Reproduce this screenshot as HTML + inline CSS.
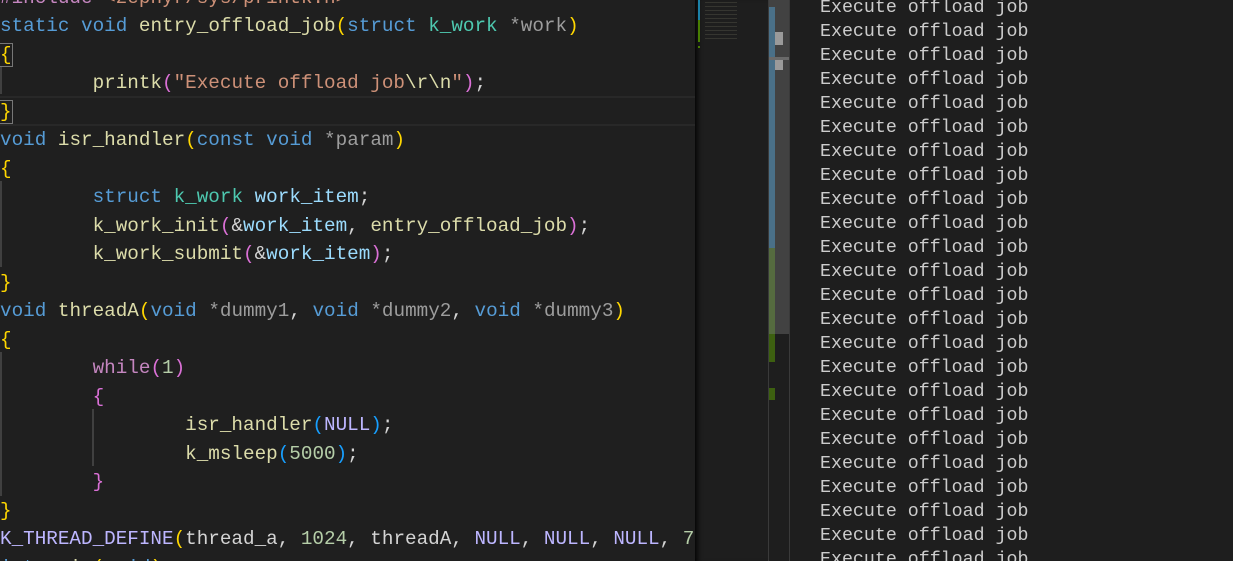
<!DOCTYPE html>
<html><head><meta charset="utf-8"><style>
html,body{margin:0;padding:0;width:1233px;height:561px;overflow:hidden;background:#1e1e1e}
.ed{position:absolute;left:0;top:0;width:695px;height:561px;background:#1f1f1f;overflow:hidden;font-family:"Liberation Mono",monospace;font-size:19.3px;color:#d4d4d4}
.l{position:absolute;left:0;height:28px;line-height:28px;white-space:pre;margin-top:2px}
.k{color:#569cd6}.f{color:#dcdcaa}.s{color:#ce9178}.y{color:#ffd700}.p{color:#da70d6}.b{color:#179fff}
.v{color:#9cdcfe}.n{color:#b5cea8}.t{color:#4ec9b0}.g{color:#9d9d9d}.m{color:#c586c0}.mc{color:#bdb6ff}
.con{position:absolute;left:790px;top:0;width:443px;height:561px;background:#1e1e1e;font-family:"Liberation Mono",monospace;font-size:18.3px;color:#cccccc;overflow:hidden}
.c{position:absolute;left:30px;height:24px;line-height:24px;white-space:pre;margin-top:2px}
</style></head><body>
<div class="ed">
<div style="position:absolute;left:0;top:96px;width:695px;height:26px;border-top:2px solid #282828;border-bottom:2px solid #282828"></div>
<div style="position:absolute;left:0;top:66px;width:2px;height:28px;background:#404040"></div>
<div style="position:absolute;left:0;top:181px;width:2px;height:86px;background:#404040"></div>
<div style="position:absolute;left:0;top:352px;width:2px;height:144px;background:#404040"></div>
<div style="position:absolute;left:92px;top:409px;width:2px;height:57px;background:#404040"></div>
<div class="l" style="top:-18px"><span class="m">#include</span> <span class="s">&lt;zephyr/sys/printk.h&gt;</span></div>
<div class="l" style="top:10px"><span class="k">static</span> <span class="k">void</span> <span class="f">entry_offload_job</span><span class="y">(</span><span class="k">struct</span> <span class="t">k_work</span> <span class="g">*work</span><span class="y">)</span></div>
<div class="l" style="top:39px"><span class="y" style="outline:1px solid #777">{</span></div>
<div class="l" style="top:67px">        <span class="f">printk</span><span class="p">(</span><span class="s">"Execute offload job</span><span class="f">\r\n</span><span class="s">"</span><span class="p">)</span>;</div>
<div class="l" style="top:96px"><span class="y" style="outline:1px solid #777">}</span></div>
<div class="l" style="top:124px"><span class="k">void</span> <span class="f">isr_handler</span><span class="y">(</span><span class="k">const</span> <span class="k">void</span> <span class="g">*param</span><span class="y">)</span></div>
<div class="l" style="top:153px"><span class="y">{</span></div>
<div class="l" style="top:181px">        <span class="k">struct</span> <span class="t">k_work</span> <span class="v">work_item</span>;</div>
<div class="l" style="top:210px">        <span class="f">k_work_init</span><span class="p">(</span>&amp;<span class="v">work_item</span>, <span class="f">entry_offload_job</span><span class="p">)</span>;</div>
<div class="l" style="top:238px">        <span class="f">k_work_submit</span><span class="p">(</span>&amp;<span class="v">work_item</span><span class="p">)</span>;</div>
<div class="l" style="top:267px"><span class="y">}</span></div>
<div class="l" style="top:295px"><span class="k">void</span> <span class="f">threadA</span><span class="y">(</span><span class="k">void</span> <span class="g">*dummy1</span>, <span class="k">void</span> <span class="g">*dummy2</span>, <span class="k">void</span> <span class="g">*dummy3</span><span class="y">)</span></div>
<div class="l" style="top:324px"><span class="y">{</span></div>
<div class="l" style="top:352px">        <span class="m">while</span><span class="p">(</span><span class="n">1</span><span class="p">)</span></div>
<div class="l" style="top:381px">        <span class="p">{</span></div>
<div class="l" style="top:409px">                <span class="f">isr_handler</span><span class="b">(</span><span class="mc">NULL</span><span class="b">)</span>;</div>
<div class="l" style="top:438px">                <span class="f">k_msleep</span><span class="b">(</span><span class="n">5000</span><span class="b">)</span>;</div>
<div class="l" style="top:466px">        <span class="p">}</span></div>
<div class="l" style="top:495px"><span class="y">}</span></div>
<div class="l" style="top:523px"><span class="mc">K_THREAD_DEFINE</span><span class="y">(</span>thread_a, <span class="n">1024</span>, threadA, <span class="mc">NULL</span>, <span class="mc">NULL</span>, <span class="mc">NULL</span>, <span class="n">7</span>, <span class="n">0</span>, <span class="n">0</span><span class="y">)</span>;</div>
<div class="l" style="top:552px"><span class="k">int</span> <span class="f">main</span><span class="y">(</span><span class="k">void</span><span class="y">)</span></div>
</div>
<div style="position:absolute;left:695px;top:0;width:73px;height:561px;background:#1e1e1e;box-shadow:inset 6px 0 6px -4px #000"></div>
<div style="position:absolute;left:698px;top:0;width:2px;height:20px;background:#1b81a8"></div>
<div style="position:absolute;left:698px;top:20px;width:2px;height:22px;background:#487e02"></div>
<div style="position:absolute;left:698px;top:46px;width:2px;height:2px;background:#487e02"></div>
<div style="position:absolute;left:705px;top:2px;width:32px;height:40px;opacity:.18;background:repeating-linear-gradient(#a0a080 0 1px,transparent 1px 4px)"></div>
<div style="position:absolute;left:768px;top:0;width:21px;height:334px;background:#424242"></div>
<div style="position:absolute;left:768px;top:0;width:1px;height:561px;background:#3a3a3a"></div>
<div style="position:absolute;left:789px;top:0;width:1px;height:561px;background:#3a3a3a"></div>
<div style="position:absolute;left:769px;top:7px;width:6px;height:241px;background:#4a7088"></div>
<div style="position:absolute;left:769px;top:248px;width:6px;height:86px;background:#556b3f"></div>
<div style="position:absolute;left:769px;top:334px;width:6px;height:28px;background:#3d6010"></div>
<div style="position:absolute;left:769px;top:388px;width:6px;height:12px;background:#3d6010"></div>
<div style="position:absolute;left:775px;top:32px;width:8px;height:13px;background:#9a9a9a"></div>
<div style="position:absolute;left:775px;top:57px;width:8px;height:13px;background:#9a9a9a"></div>
<div style="position:absolute;left:769px;top:57px;width:20px;height:3px;background:#6a6a6a"></div>
<div class="con">
<div class="c" style="top:-6px">Execute offload job</div>
<div class="c" style="top:18px">Execute offload job</div>
<div class="c" style="top:42px">Execute offload job</div>
<div class="c" style="top:66px">Execute offload job</div>
<div class="c" style="top:90px">Execute offload job</div>
<div class="c" style="top:114px">Execute offload job</div>
<div class="c" style="top:138px">Execute offload job</div>
<div class="c" style="top:162px">Execute offload job</div>
<div class="c" style="top:186px">Execute offload job</div>
<div class="c" style="top:210px">Execute offload job</div>
<div class="c" style="top:234px">Execute offload job</div>
<div class="c" style="top:258px">Execute offload job</div>
<div class="c" style="top:282px">Execute offload job</div>
<div class="c" style="top:306px">Execute offload job</div>
<div class="c" style="top:330px">Execute offload job</div>
<div class="c" style="top:354px">Execute offload job</div>
<div class="c" style="top:378px">Execute offload job</div>
<div class="c" style="top:402px">Execute offload job</div>
<div class="c" style="top:426px">Execute offload job</div>
<div class="c" style="top:450px">Execute offload job</div>
<div class="c" style="top:474px">Execute offload job</div>
<div class="c" style="top:498px">Execute offload job</div>
<div class="c" style="top:522px">Execute offload job</div>
<div class="c" style="top:546px">Execute offload job</div>
</div>
</body></html>
